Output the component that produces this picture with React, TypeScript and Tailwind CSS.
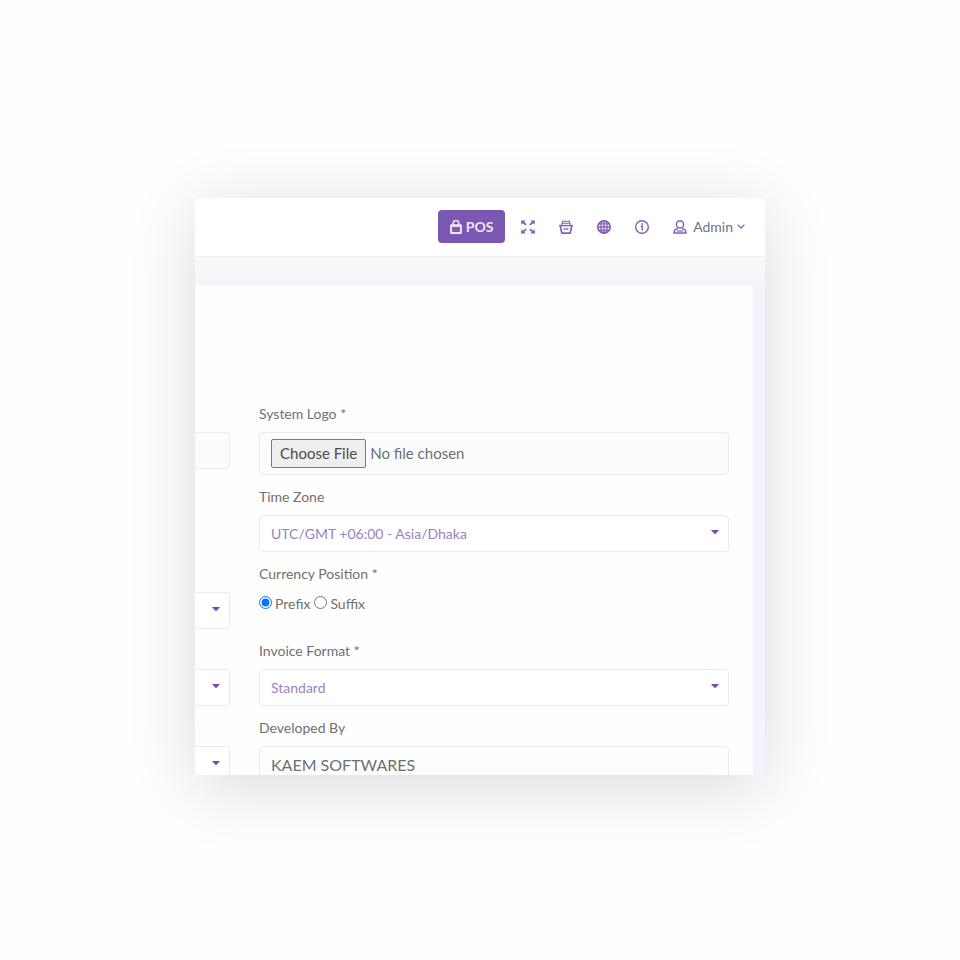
import type { ReactNode } from "react";

const fieldClass =
  "block w-full h-[37px] rounded border border-[#e9ebf0] bg-white text-sm outline-none";

function Caret() {
  return (
    <svg
      viewBox="0 0 8 4"
      className="pointer-events-none absolute right-[10px] top-[15px] h-1 w-2 fill-[#7550ae]"
      aria-hidden="true"
    >
      <path d="M0.3 0h7.4q.3.2 0 .6L4.6 3.7q-.6.5-1.2 0L.3.6Q0 .2.3 0Z" />
    </svg>
  );
}

interface SelectProps {
  id: string;
  value: string;
}

function Select({ id, value }: SelectProps) {
  return (
    <div className="relative">
      <select id={id} className={`${fieldClass} appearance-none px-[11px] text-[#9a82c1]`}>
        <option>{value}</option>
      </select>
      <Caret />
    </div>
  );
}

// Right-hand end of a select whose column continues past the left edge
function SideSelect({ label }: { label: string }) {
  return (
    <div className="relative">
      <select
        aria-label={label}
        className="block h-[37px] w-full appearance-none rounded-r border border-l-0 border-[#e9ebf0] bg-white outline-none"
      />
      <Caret />
    </div>
  );
}

interface RowProps {
  label: string;
  htmlFor?: string;
  side?: ReactNode;
  children: ReactNode;
}

function Row({ label, htmlFor, side, children }: RowProps) {
  return (
    <div className="flex gap-[29px]">
      <div className="w-[35px] shrink-0 pt-7">{side}</div>
      <div className="min-w-0 flex-1">
        <label htmlFor={htmlFor} className="mb-2 block text-sm leading-5">
          {label}
        </label>
        {children}
      </div>
    </div>
  );
}

function BagIcon() {
  return (
    <svg viewBox="0 0 12 14" className="h-3.5 w-3" fill="none" stroke="currentColor" aria-hidden="true">
      <path d="M3.2 6V3.2a2.8 2.8 0 0 1 5.6 0V6" strokeWidth="1.6" />
      <path d="M1.1 5.2h9.8v7.8H1.1z" strokeWidth="2" strokeLinejoin="round" />
      <path d="M2.5 6h7" strokeWidth="2" />
    </svg>
  );
}

function ExpandIcon() {
  return (
    <svg viewBox="0 0 14 14" className="size-3.5" fill="currentColor" aria-hidden="true">
      <path d="M0 .4h4.7L3.3 1.9l2.4 2.4-1.3 1.3L2 3.2.4 4.8ZM14 .4H9.3l1.4 1.5-2.4 2.4 1.3 1.3L12 3.2l1.6 1.6ZM0 13.6h4.7l-1.4-1.5 2.4-2.4-1.3-1.3L2 10.8.4 9.2ZM14 13.6H9.3l1.4-1.5-2.4-2.4 1.3-1.3 2.4 2.4 1.6-1.6Z" />
    </svg>
  );
}

function BasketIcon() {
  return (
    <svg viewBox="0 0 14 14" className="size-3.5" fill="none" stroke="currentColor" aria-hidden="true">
      <path d="M2.6 4.8 3.6 1.2h6.8l1 3.6M3 3.2h8" strokeWidth="1.1" />
      <path d="M0 5.6h14" strokeWidth="1.5" />
      <path d="M1.3 6l1.5 7.2h8.4L12.7 6" strokeWidth="1.7" strokeLinejoin="round" />
      <path d="M4.6 9h4.8" strokeWidth="1.4" />
    </svg>
  );
}

function GlobeIcon() {
  return (
    <svg viewBox="0 0 14 14" className="size-3.5" fill="none" stroke="currentColor" aria-hidden="true">
      <circle cx="7" cy="7" r="6.2" strokeWidth="1.6" />
      <ellipse cx="7" cy="7" rx="3.2" ry="6.2" strokeWidth="1.3" />
      <path d="M7 .7v12.6M.7 7h12.6M1.6 3.9h10.8M1.6 10.1h10.8" strokeWidth="1.3" />
    </svg>
  );
}

function InfoIcon() {
  return (
    <svg viewBox="0 0 14 14" className="size-3.5" fill="none" stroke="currentColor" aria-hidden="true">
      <circle cx="7" cy="7" r="6.3" strokeWidth="1.4" />
      <path d="M5.8 6.2h1.5v4.4M7.3 3.3v1.6" strokeWidth="1.4" />
    </svg>
  );
}

function UserIcon() {
  return (
    <svg viewBox="0 0 14 14" className="size-3.5" fill="none" stroke="currentColor" aria-hidden="true">
      <circle cx="7" cy="4.4" r="3.6" strokeWidth="1.5" />
      <path d="M4.8 8.3 1.6 10.2.8 13h12.4l-.8-2.8-3.2-1.9" strokeWidth="1.4" strokeLinejoin="round" />
      <path d="M3.8 11h6.4" strokeWidth="1.2" />
    </svg>
  );
}

function Header() {
  return (
    <header className="flex items-center justify-end border-b border-[#eff0f3] bg-white pt-3 pr-5 pb-[13px] text-[#8261b9]">
      <button
        type="button"
        className="mr-4 flex h-[33px] w-[67px] items-center justify-center gap-1 rounded bg-[#7a57b1] text-sm font-bold text-[#eee6fa]"
      >
        <BagIcon />
        POS
      </button>
      <nav className="flex items-center gap-6">
        <button type="button" aria-label="Full screen">
          <ExpandIcon />
        </button>
        <a href="#orders" aria-label="Orders">
          <BasketIcon />
        </a>
        <a href="#language" aria-label="Language">
          <GlobeIcon />
        </a>
        <a href="#help" aria-label="Help">
          <InfoIcon />
        </a>
        <button type="button" className="flex items-center">
          <UserIcon />
          <span className="ml-1.5 mr-1 text-sm text-[#737373]">Admin</span>
          <svg viewBox="0 0 8 5" className="h-[5px] w-2" fill="none" stroke="currentColor" strokeWidth="1.3" aria-hidden="true">
            <path d="M.6.6 4 4 7.4.6" />
          </svg>
        </button>
      </nav>
    </header>
  );
}

export default function App() {
  return (
    <div className="flex min-h-screen items-center justify-center bg-[#fdfefe] pt-[13px] font-['Lato',sans-serif] text-[#707070]">
      <div className="w-full max-w-[570px] bg-[#f3f4fb] shadow-[0_12px_64px_rgba(0,0,0,0.14)]">
        <Header />
        <div className="h-[29px] bg-linear-to-b from-[#f8f9fb] to-[#f3f5f9]" />
        <main className="mr-3 bg-[#fefefe] pt-[118px] pr-6">
          <form className="flex flex-col gap-3">
            <Row
              label="System Logo *"
              htmlFor="logo"
              side={
                <input
                  type="text"
                  aria-label="System title"
                  className="block h-[37px] w-full rounded-r border border-l-0 border-[#e9ebf0] bg-[#fbfcfe] outline-none"
                />
              }
            >
              <input
                id="logo"
                type="file"
                className="block h-[43px] w-full rounded border border-[#e9ebf0] bg-[#fbfcfe] px-[11px] py-[6px] text-[15px] file:mr-1 file:h-[29px] file:rounded-xs file:border file:border-solid file:border-[#77797b] file:bg-[#efefef] file:px-2 file:text-[#4c4c4c]"
              />
            </Row>
            <Row label="Time Zone" htmlFor="timezone">
              <Select id="timezone" value="UTC/GMT +06:00 - Asia/Dhaka" />
            </Row>
            <Row label="Currency Position *" side={<SideSelect label="Currency" />}>
              <div className="flex h-[37px] items-start text-sm leading-6">
                <input id="prefix" type="radio" name="position" defaultChecked className="mt-1 mr-[3px] size-[13px] accent-[#0075ff]" />
                <label htmlFor="prefix" className="mr-1">Prefix</label>
                <input id="suffix" type="radio" name="position" className="mt-1 mr-[3px] size-[13px]" />
                <label htmlFor="suffix">Suffix</label>
              </div>
            </Row>
            <Row label="Invoice Format *" htmlFor="invoice" side={<SideSelect label="Date format" />}>
              <Select id="invoice" value="Standard" />
            </Row>
            <div className="h-[57px] overflow-hidden">
              <Row label="Developed By" htmlFor="developer" side={<SideSelect label="Theme" />}>
                <input
                  id="developer"
                  type="text"
                  defaultValue="KAEM SOFTWARES"
                  className="block h-[37px] w-full rounded border border-[#e9ebf0] bg-[#fcfdfd] px-[11px] text-base outline-none"
                />
              </Row>
            </div>
          </form>
        </main>
      </div>
    </div>
  );
}
